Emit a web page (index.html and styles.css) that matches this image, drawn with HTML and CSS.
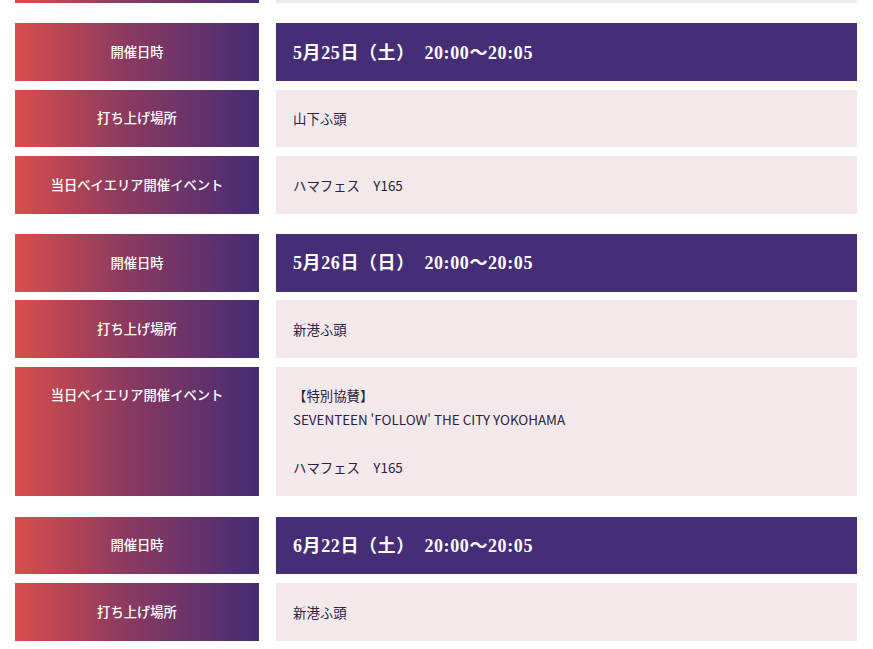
FILE: index.html
```html
<!DOCTYPE html>
<html lang="ja">
<head>
<meta charset="utf-8">
<link rel="stylesheet" href="styles.css">
</head>
<body>
<div class="schedule">
  <div class="group group-prev">
    <div class="row">
      <div class="label"></div>
      <div class="value"></div>
    </div>
  </div>
  <div class="group">
    <div class="row">
      <div class="label">開催日時</div>
      <div class="value date">5月25日（土）　20:00〜20:05</div>
    </div>
    <div class="row">
      <div class="label">打ち上げ場所</div>
      <div class="value">山下ふ頭</div>
    </div>
    <div class="row">
      <div class="label">当日ベイエリア開催イベント</div>
      <div class="value">ハマフェス　Y165</div>
    </div>
  </div>
  <div class="group">
    <div class="row">
      <div class="label">開催日時</div>
      <div class="value date">5月26日（日）　20:00〜20:05</div>
    </div>
    <div class="row">
      <div class="label">打ち上げ場所</div>
      <div class="value">新港ふ頭</div>
    </div>
    <div class="row">
      <div class="label">当日ベイエリア開催イベント</div>
      <div class="value">【特別協賛】<br>SEVENTEEN 'FOLLOW' THE CITY YOKOHAMA<br><br>ハマフェス　Y165</div>
    </div>
  </div>
  <div class="group">
    <div class="row">
      <div class="label">開催日時</div>
      <div class="value date">6月22日（土）　20:00〜20:05</div>
    </div>
    <div class="row">
      <div class="label">打ち上げ場所</div>
      <div class="value">新港ふ頭</div>
    </div>
  </div>
</div>
</body>
</html>
```

FILE: styles.css
```css
html, body {
  margin: 0;
  padding: 0;
  background: #ffffff;
}
body {
  font-family: "Noto Sans CJK JP", "Noto Sans", sans-serif;
  overflow: hidden;
}
.schedule {
  display: flex;
  flex-direction: column;
  gap: 20.4px;
  padding: 0 16.3px 0 15px;
  margin-top: -54.7px;
}
.group {
  display: flex;
  flex-direction: column;
  gap: 8.6px;
}
.row {
  display: grid;
  grid-template-columns: 244px 1fr;
  column-gap: 17px;
  min-height: 57.7px;
}
.label {
  background: linear-gradient(90deg, #d94e4b 0%, #8c3a5f 45%, #452c75 100%);
  color: #ffffff;
  font-size: 13.3px;
  font-weight: 500;
  line-height: 24px;
  text-align: center;
  padding: 16.8px 8px 16.9px;
}
.value {
  background: #f4e9ea;
  color: #2b2145;
  font-size: 13.4px;
  line-height: 24px;
  padding: 16.8px 17px 16.9px;
}
.value.date {
  background: #452d77;
  color: #ffffff;
  font-family: "Liberation Serif", "Noto Sans CJK JP", serif;
  font-weight: 700;
  font-size: 18px;
  letter-spacing: 0.6px;
  padding-top: 17.4px;
  padding-bottom: 16.3px;
}
```
